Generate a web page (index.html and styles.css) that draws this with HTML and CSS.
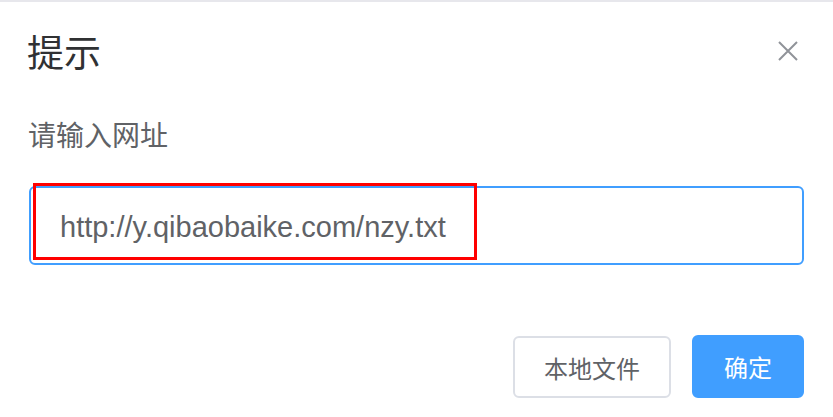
FILE: index.html
```html
<!DOCTYPE html>
<html lang="zh-CN">
<head>
<meta charset="utf-8">
<title>提示</title>
<link rel="stylesheet" href="styles.css">
</head>
<body>
<div class="dialog">
  <div class="header">
    <span class="title">提示</span>
    <button class="close" aria-label="关闭">
      <svg width="20" height="20" viewBox="0 0 20 20"><path d="M1 1 L19 19 M19 1 L1 19" stroke="#909399" stroke-width="2" fill="none"/></svg>
    </button>
  </div>
  <div class="label">请输入网址</div>
  <div class="field">
    <input class="input" type="text" value="http://y.qibaobaike.com/nzy.txt">
    <div class="highlight"></div>
  </div>
  <div class="footer">
    <button class="btn btn-default">本地文件</button>
    <button class="btn btn-primary">确定</button>
  </div>
</div>
</body>
</html>
```
FILE: styles.css
```css
html, body {
  margin: 0;
  padding: 0;
  background: #ffffff;
}
body {
  font-family: "Noto Sans CJK SC", "Liberation Sans", sans-serif;
}
.dialog {
  border-top: 2px solid #e7e7ec;
  padding: 0 29px;
  width: 833px;
  box-sizing: border-box;
}
.header {
  height: 98px;
  display: flex;
  align-items: center;
  justify-content: space-between;
  padding-right: 6px;
}
.title {
  font-size: 37px;
  line-height: 40px;
  color: #303133;
  margin-left: -2px;
}
.close {
  border: 0;
  background: none;
  padding: 0;
  width: 20px;
  height: 20px;
  display: block;
}
.close svg { display: block; }
.label {
  margin-top: 16px;
  font-size: 28px;
  line-height: 36px;
  color: #606266;
  margin-left: -1px;
}
.field {
  position: relative;
  margin-top: 34px;
}
.input {
  display: block;
  width: 100%;
  box-sizing: border-box;
  height: 79px;
  border: 2px solid #409eff;
  border-radius: 6px;
  padding: 3px 0 0 29px;
  font-family: "Liberation Sans", sans-serif;
  font-size: 29px;
  color: #606266;
  outline: none;
  background: #fff;
}
.highlight {
  position: absolute;
  left: 4px;
  top: -3px;
  width: 444px;
  height: 77px;
  border: 3px solid #ff0000;
  box-sizing: border-box;
  pointer-events: none;
}
.footer {
  margin-top: 71px;
  display: flex;
  justify-content: flex-end;
  gap: 21px;
}
.btn {
  height: 62px;
  font-family: "Noto Sans CJK SC", sans-serif;
  font-size: 24px;
  border-radius: 6px;
  border: 2px solid #dcdfe6;
  background: #fff;
  color: #606266;
  padding: 0 29px;
}
.btn-primary {
  height: 63px;
  margin-top: -1px;
  background: #409eff;
  border-color: #409eff;
  color: #ffffff;
  padding: 0 30px;
}
```
